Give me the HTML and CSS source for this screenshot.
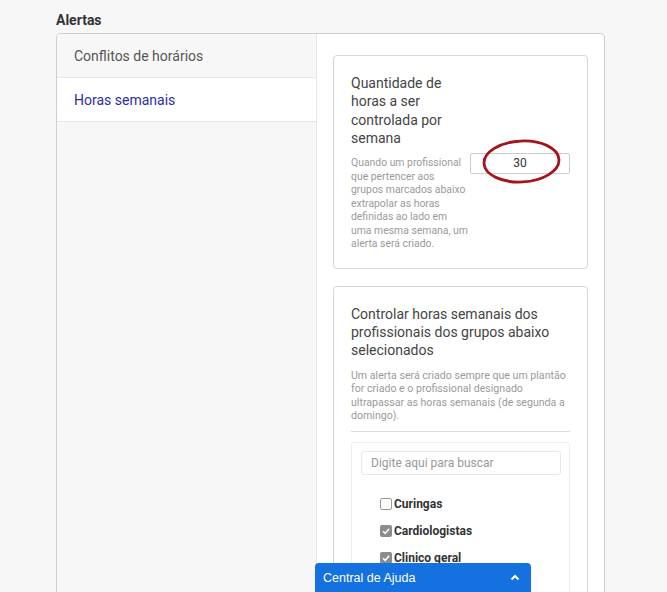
FILE: index.html
```html
<!DOCTYPE html>
<html lang="pt-BR">
<head>
    <meta charset="UTF-8">
    <meta name="viewport" content="width=device-width, initial-scale=1.0">
    <title>Alertas</title>
    <link rel="stylesheet" href="styles.css">
</head>
<body>
    <div class="page">
        <h2 class="section-title">Alertas</h2>
        <div class="panel">
            <div class="side-nav">
                <a class="nav-item" href="#">Conflitos de horários</a>
                <a class="nav-item active" href="#">Horas semanais</a>
            </div>
            <div class="content">
                <div class="card hours-card">
                    <h3 class="card-title">Quantidade de horas a ser controlada por semana</h3>
                    <p class="card-desc">Quando um profissional que pertencer aos grupos&nbsp;marcados abaixo extrapolar as horas definidas ao lado em uma&nbsp;mesma semana, um alerta será criado.</p>
                    <div class="hours-input">
                        <input type="text" id="hoursInput" value="30">
                        <svg class="mark" width="81" height="47" viewBox="0 0 81 47">
                            <ellipse cx="40.5" cy="23.5" rx="37.5" ry="20.5" transform="rotate(-3 40.5 23.5)" fill="none" stroke="#a3141c" stroke-width="2.8"/>
                        </svg>
                    </div>
                </div>
                <div class="card groups-card">
                    <h3 class="card-title">Controlar horas semanais dos profissionais dos grupos abaixo selecionados</h3>
                    <p class="card-desc">Um alerta será criado sempre que um plantão for criado e o profissional designado ultrapassar as horas semanais (de segunda a domingo).</p>
                    <hr class="divider">
                    <div class="group-box">
                        <input type="text" class="search" placeholder="Digite aqui para buscar">
                        <ul class="group-list">
                            <li><span class="check"></span>Curingas</li>
                            <li><span class="check checked"><svg width="12" height="12" viewBox="0 0 12 12"><polyline points="3,6.2 5.2,8.4 9.2,3.8" fill="none" stroke="#fff" stroke-width="1.6"/></svg></span>Cardiologistas</li>
                            <li><span class="check checked"><svg width="12" height="12" viewBox="0 0 12 12"><polyline points="3,6.2 5.2,8.4 9.2,3.8" fill="none" stroke="#fff" stroke-width="1.6"/></svg></span>Clinico geral</li>
                            <li><span class="check"></span>Pediatras</li>
                            <li><span class="check"></span>Enfermeiros</li>
                        </ul>
                    </div>
                </div>
            </div>
        </div>
    </div>
    <div class="help-bar">
        <span>Central de Ajuda</span>
        <svg width="10" height="7" viewBox="0 0 10 7"><polyline points="1.5,5.5 5,2 8.5,5.5" fill="none" stroke="#fff" stroke-width="2"/></svg>
    </div>
</body>
</html>
```

FILE: styles.css
```css
html, body {
    height: 100%;
    overflow: hidden;
}
body {
    font-family: Roboto, "Liberation Sans", Arial, sans-serif;
    background-color: #f7f7f7;
    color: #444;
    margin: 0;
    padding: 0;
}
.page {
    padding: 12px 62px 0 56px;
}
.section-title {
    font-size: 14px;
    line-height: 17px;
    font-weight: bold;
    color: #333;
    margin: 0 0 4px;
}
.panel {
    display: flex;
    background-color: #fff;
    border: 1px solid #cfcfcf;
    border-radius: 4px;
    min-height: 700px;
}
.side-nav {
    width: 259px;
    background-color: #f7f7f7;
    border-right: 1px solid #e6e6e6;
    border-radius: 4px 0 0 4px;
}
.nav-item {
    display: flex;
    align-items: center;
    height: 43px;
    padding: 0 17px;
    border-bottom: 1px solid #e6e6e6;
    font-size: 14px;
    color: #555;
    text-decoration: none;
}
.nav-item.active {
    background-color: #fff;
    color: #2c2caa;
}
.content {
    flex: 1;
    padding: 21px 16px 0 16px;
}
.card {
    border: 1px solid #d6d6d6;
    border-radius: 4px;
    padding: 18px 17px 17px;
}
.card-title {
    font-size: 14px;
    line-height: 18.3px;
    font-weight: normal;
    color: #444;
    margin: 0;
}
.card-desc {
    font-size: 10.6px;
    line-height: 13.5px;
    color: #9a9a9a;
    margin: 9px 0 0;
}
.hours-card {
    display: grid;
    grid-template-columns: 1fr 100px;
}
.hours-card .card-title,
.hours-card .card-desc {
    grid-column: 1;
}
.hours-card .card-desc {
    font-size: 10.4px;
}
.hours-input {
    grid-column: 2;
    grid-row: 2;
    position: relative;
    margin-top: 5px;
}
.hours-input input {
    box-sizing: border-box;
    width: 100px;
    height: 21px;
    border: 1px solid #ccc;
    border-radius: 2px;
    text-align: center;
    font-family: inherit;
    font-size: 12px;
    color: #333;
    padding: 0;
}
.mark {
    position: absolute;
    left: 11px;
    top: -14px;
    pointer-events: none;
}
.groups-card {
    margin-top: 17px;
}
.divider {
    border: none;
    border-top: 1px solid #ddd;
    margin: 8px 0 10px;
}
.group-box {
    border: 1px solid #eee;
    border-radius: 3px;
    padding: 8px 8px 9px 9px;
}
.search {
    box-sizing: border-box;
    width: 100%;
    height: 24px;
    border: 1px solid #e8e8e8;
    border-radius: 3px;
    padding: 0 9px;
    font-family: inherit;
    font-size: 12px;
}
.search::placeholder {
    color: #999;
}
.group-list {
    list-style-type: none;
    margin: 16px 0 0;
    padding: 0 0 0 19px;
}
.group-list li {
    display: flex;
    align-items: center;
    height: 27px;
    font-size: 12px;
    font-weight: bold;
    color: #333;
}
.check {
    box-sizing: border-box;
    width: 12px;
    height: 12px;
    margin-right: 2px;
    border: 1px solid #999;
    border-radius: 2px;
    background-color: #fff;
}
.check.checked {
    border: none;
    background-color: #8c8c8c;
}
.check svg {
    display: block;
}
.help-bar {
    position: fixed;
    left: 315px;
    bottom: 0;
    box-sizing: border-box;
    width: 216px;
    height: 29px;
    padding: 0 11px 0 8px;
    display: flex;
    justify-content: space-between;
    align-items: center;
    background-color: #1570e0;
    border-radius: 4px 4px 0 0;
    color: #fff;
    font-family: "Liberation Sans", Arial, sans-serif;
    font-size: 12.5px;
}
```
